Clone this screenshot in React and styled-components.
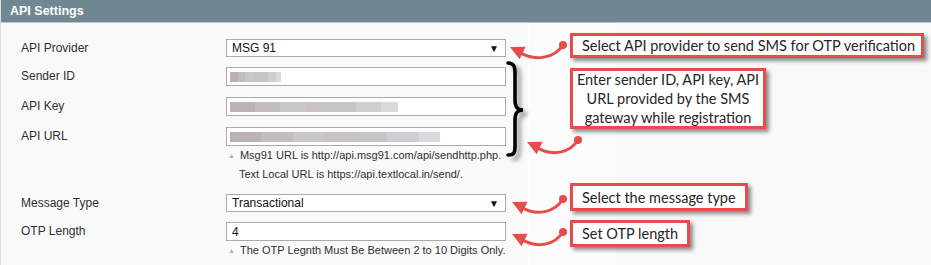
import styled, { createGlobalStyle } from "styled-components";

const GlobalStyle = createGlobalStyle`
	html, body {
		margin: 0;
		padding: 0;
		background: #f9f9f9;
	}
	body {
		font-family: "Liberation Sans", Arial, sans-serif;
		width: 931px;
		height: 265px;
		overflow: hidden;
	}
`;

const Page = styled.div`
	position: relative;
	width: 931px;
	height: 265px;
	background: #f9f9f9;
	border-left: 1px solid #dedede;
	box-sizing: border-box;
`;

const Header = styled.div`
	height: 22px;
	background: #6f8891;
	border-bottom: 1px solid #b7c4c8;
	display: flex;
	align-items: center;
	padding-left: 9px;
	color: #fff;
	font-weight: bold;
	font-size: 12.5px;
`;

const Body = styled.div`
	display: flex;
	height: 242px;
`;

const Fields = styled.div`
	width: 527px;
	padding-top: 16px;
	box-sizing: border-box;
`;

const ScopeColumn = styled.div`
	width: 85px;
	background: #fcfcfc;
	border-left: 1px solid #fff;
	border-right: 1px solid #fff;
`;

const Row = styled.div`
	display: flex;
	align-items: flex-start;
	margin-bottom: ${(p) => p.$gap}px;
`;

const Label = styled.div`
	width: 205px;
	padding-left: 20px;
	font-size: 12px;
	color: #303030;
	line-height: ${(p) => p.$h}px;
`;

const Value = styled.div`
	width: 280px;
	display: flex;
	flex-direction: column;
`;

const Control = styled.div`
	height: ${(p) => p.$h}px;
	box-sizing: border-box;
	border: 1px solid #aaa;
	background: #fff;
	display: flex;
	align-items: center;
	padding: 0 5px 0 3px;
	font-size: 12px;
	color: #111;
`;

const SelectText = styled.span`
	flex: 1;
	padding-left: 2px;
`;

const Caret = styled.span`
	font-size: 10px;
	color: #111;
	margin-right: 1px;
`;

const Redacted = styled.span`
	display: block;
	height: 10px;
	width: ${(p) => p.$w}px;
	background: linear-gradient(
		90deg,
		#bab2b7 0 15%,
		#c4bdc0 15% 30%,
		#cac7cb 30% 45%,
		#c9c4c2 45% 60%,
		#c6c6c6 60% 75%,
		#cdd0d2 75% 90%,
		#d8dadd 90% 100%
	);
`;

const Note = styled.div`
	font-size: 11px;
	color: #303030;
	line-height: 19px;
	padding-left: 2px;
	display: flex;
	align-items: center;
	gap: 5px;
`;

const NoteLine = styled.div`
	font-size: 11px;
	color: #303030;
	line-height: 19px;
	padding-left: 13px;
`;

const Tri = styled.span`
	font-size: 7px;
	color: #a4b3ba;
`;

const Callout = styled.div`
	position: absolute;
	left: ${(p) => p.$x}px;
	top: ${(p) => p.$y}px;
	width: ${(p) => p.$w}px;
	height: ${(p) => p.$h}px;
	box-sizing: border-box;
	border: 3px solid #e84b4b;
	background: #fff;
	box-shadow: 3px 3px 4px rgba(0, 0, 0, 0.45);
	font-family: Lato, "Open Sans", sans-serif;
	font-size: 14.5px;
	color: #262626;
	display: flex;
	align-items: center;
	justify-content: ${(p) => (p.$center ? "center" : "flex-start")};
	text-align: ${(p) => (p.$center ? "center" : "left")};
	padding-left: ${(p) => (p.$center ? 0 : 9)}px;
	line-height: 19px;
`;

const Overlay = styled.svg`
	position: absolute;
	left: 0;
	top: 0;
	pointer-events: none;
`;

const arrowPath = (dx, dy, tx, ty) =>
	`M ${dx} ${dy} C ${dx - 8} ${dy + 13}, ${tx + 25} ${ty + 15}, ${tx + 9} ${ty + 5}`;

const Arrow = ({ dx, dy, tx, ty }) => {
	const ux = -0.9;
	const uy = -0.43;
	const bx = tx - ux * 14;
	const by = ty - uy * 14;
	const nx = -uy * 7;
	const ny = ux * 7;
	return (
		<g>
			<path d={arrowPath(dx, dy, tx, ty)} fill="none" stroke="#e84b4b" strokeWidth="3" strokeLinecap="round" />
			<circle cx={dx} cy={dy} r="4" fill="#e84b4b" />
			<polygon
				points={`${tx},${ty} ${bx + nx},${by + ny} ${bx - nx},${by - ny}`}
				fill="#e84b4b"
			/>
		</g>
	);
};

const bracePath =
	"M 507 63 C 515 63, 514 70, 514 78 L 514 100 C 514 107, 516 110, 522 110 C 516 110, 514 113, 514 120 L 514 142 C 514 150, 515 155, 507 155";

export default function App() {
	return (
		<>
			<GlobalStyle />
			<Page>
				<Header>API Settings</Header>
				<Body>
					<Fields>
						<Row $gap={10}>
							<Label $h={18}>API Provider</Label>
							<Value>
								<Control $h={18}>
									<SelectText>MSG 91</SelectText>
									<Caret>▼</Caret>
								</Control>
							</Value>
						</Row>
						<Row $gap={11}>
							<Label $h={19}>Sender ID</Label>
							<Value>
								<Control $h={19}>
									<Redacted $w={51} />
								</Control>
							</Value>
						</Row>
						<Row $gap={11}>
							<Label $h={19}>API Key</Label>
							<Value>
								<Control $h={19}>
									<Redacted $w={168} />
								</Control>
							</Value>
						</Row>
						<Row $gap={10}>
							<Label $h={19}>API URL</Label>
							<Value>
								<Control $h={19}>
									<Redacted $w={210} />
								</Control>
								<Note>
									<Tri>▲</Tri>Msg91 URL is http://api.msg91.com/api/sendhttp.php.
								</Note>
								<NoteLine>Text Local URL is https://api.textlocal.in/send/.</NoteLine>
							</Value>
						</Row>
						<Row $gap={10}>
							<Label $h={18}>Message Type</Label>
							<Value>
								<Control $h={18}>
									<SelectText>Transactional</SelectText>
									<Caret>▼</Caret>
								</Control>
							</Value>
						</Row>
						<Row $gap={0}>
							<Label $h={19}>OTP Length</Label>
							<Value>
								<Control $h={19}>
									<SelectText>4</SelectText>
								</Control>
								<Note>
									<Tri>▲</Tri>The OTP Legnth Must Be Between 2 to 10 Digits Only.
								</Note>
							</Value>
						</Row>
					</Fields>
					<ScopeColumn />
				</Body>

				<Overlay width="931" height="265" viewBox="0 0 931 265">
					<defs>
						<filter id="soft" x="-50%" y="-20%" width="200%" height="140%">
							<feGaussianBlur stdDeviation="2" />
						</filter>
					</defs>
					<path d={bracePath} transform="translate(4 4)" fill="none" stroke="#777" strokeWidth="4" opacity="0.7" filter="url(#soft)" />
					<path d={bracePath} fill="none" stroke="#000" strokeWidth="3.6" strokeLinecap="round" />
					<Arrow dx={562} dy={45} tx={509} ty={47} />
					<Arrow dx={577} dy={140} tx={526} ty={142} />
					<Arrow dx={562} dy={199} tx={511} ty={202} />
					<Arrow dx={562} dy={232} tx={511} ty={234} />
				</Overlay>

				<Callout $x={569} $y={33} $w={354} $h={25}>
					Select API provider to send SMS for OTP verification
				</Callout>
				<Callout $x={569} $y={68} $w={196} $h={61} $center>
					Enter sender ID, API key, API
					<br />
					URL provided by the SMS
					<br />
					gateway while registration
				</Callout>
				<Callout $x={569} $y={183} $w={178} $h={28}>
					Select the message type
				</Callout>
				<Callout $x={569} $y={220} $w={120} $h={27}>
					Set OTP length
				</Callout>
			</Page>
		</>
	);
}
